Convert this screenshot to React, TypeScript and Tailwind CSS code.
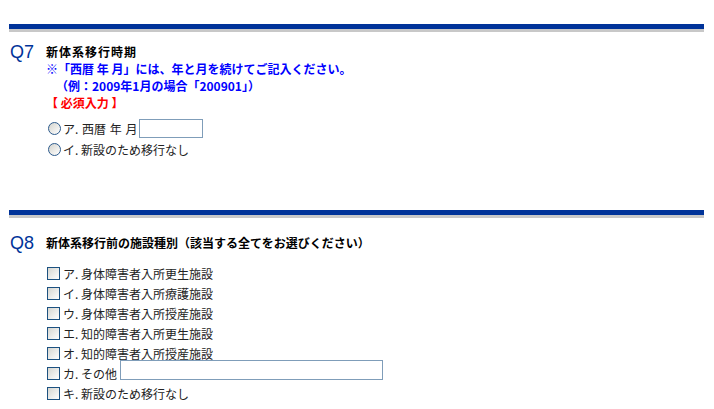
import React from 'react';

const jp = "font-['Noto_Sans_CJK_JP',sans-serif]";

function SectionBar() {
  return (
    <div>
      <div className="h-[5px] bg-[#003399]" />
      <div className="h-[3px] bg-[#c8c8c8]" />
    </div>
  );
}

function Radio() {
  return (
    <span className="inline-block w-[13px] h-[13px] rounded-full border border-[#2c5a8c] bg-linear-to-br from-[#d4d4ce] to-white shrink-0" />
  );
}

function Checkbox() {
  return (
    <span className="inline-block w-[13px] h-[13px] border border-[#1c5180] bg-linear-to-br from-[#d6d6d0] to-white shrink-0" />
  );
}

function QLabel({ children }: { children: React.ReactNode }) {
  return (
    <div className="w-[37px] shrink-0 pl-[1px] font-['Liberation_Sans',sans-serif] text-[18px] leading-[18px] text-[#003399]">
      {children}
    </div>
  );
}

const facilities = [
  'ア. 身体障害者入所更生施設',
  'イ. 身体障害者入所療護施設',
  'ウ. 身体障害者入所授産施設',
  'エ. 知的障害者入所更生施設',
  'オ. 知的障害者入所授産施設',
];

export default function App() {
  return (
    <div className={`w-[714px] h-[409px] overflow-hidden bg-white pl-[9px] pr-[10px] pt-[24px] text-[12px] text-[#222] ${jp}`}>
      {/* Q7 */}
      <section>
        <SectionBar />
        <div className="flex mt-[11px]">
          <QLabel>Q7</QLabel>
          <div className="leading-[17px]">
            <div className="font-bold text-black tracking-[1px]">新体系移行時期</div>
            <div className="font-bold text-[#0000ff]">※「西暦 年 月」には、年と月を続けてご記入ください。</div>
            <div className="font-bold text-[#0000ff] pl-[10px]">（例：2009年1月の場合「200901」）</div>
            <div className="font-bold text-[#ff0000]">【 必須入力 】</div>
            <div className="mt-[6px] pl-[2px]">
              <label className="flex items-center h-[22px] gap-[2px]">
                <Radio />
                <span className="[word-spacing:1px]">ア. 西暦 年 月</span>
                <span className="inline-block w-[64px] h-[19px] border border-[#7f9db9] bg-white" />
              </label>
              <label className="flex items-center h-[21px] gap-[2px]">
                <Radio />
                <span>イ. 新設のため移行なし</span>
              </label>
            </div>
          </div>
        </div>
      </section>

      {/* Q8 */}
      <section className="mt-[50px]">
        <SectionBar />
        <div className="flex mt-[16px]">
          <QLabel>Q8</QLabel>
          <div className="leading-[17px]">
            <div className="font-bold text-black">新体系移行前の施設種別（該当する全てをお選びください）</div>
            <div className="mt-[12px] pl-[1px]">
              {facilities.map((f) => (
                <label key={f} className="flex items-center h-[20px] gap-[3px]">
                  <Checkbox />
                  <span>{f}</span>
                </label>
              ))}
              <label className="flex items-center h-[20px] gap-[3px]">
                <Checkbox />
                <span>カ. その他</span>
                <span className="self-start -mt-[3px] inline-block w-[263px] h-[20px] border border-[#7f9db9] bg-white" />
              </label>
              <label className="flex items-center h-[20px] gap-[3px]">
                <Checkbox />
                <span>キ. 新設のため移行なし</span>
              </label>
            </div>
          </div>
        </div>
      </section>
    </div>
  );
}
